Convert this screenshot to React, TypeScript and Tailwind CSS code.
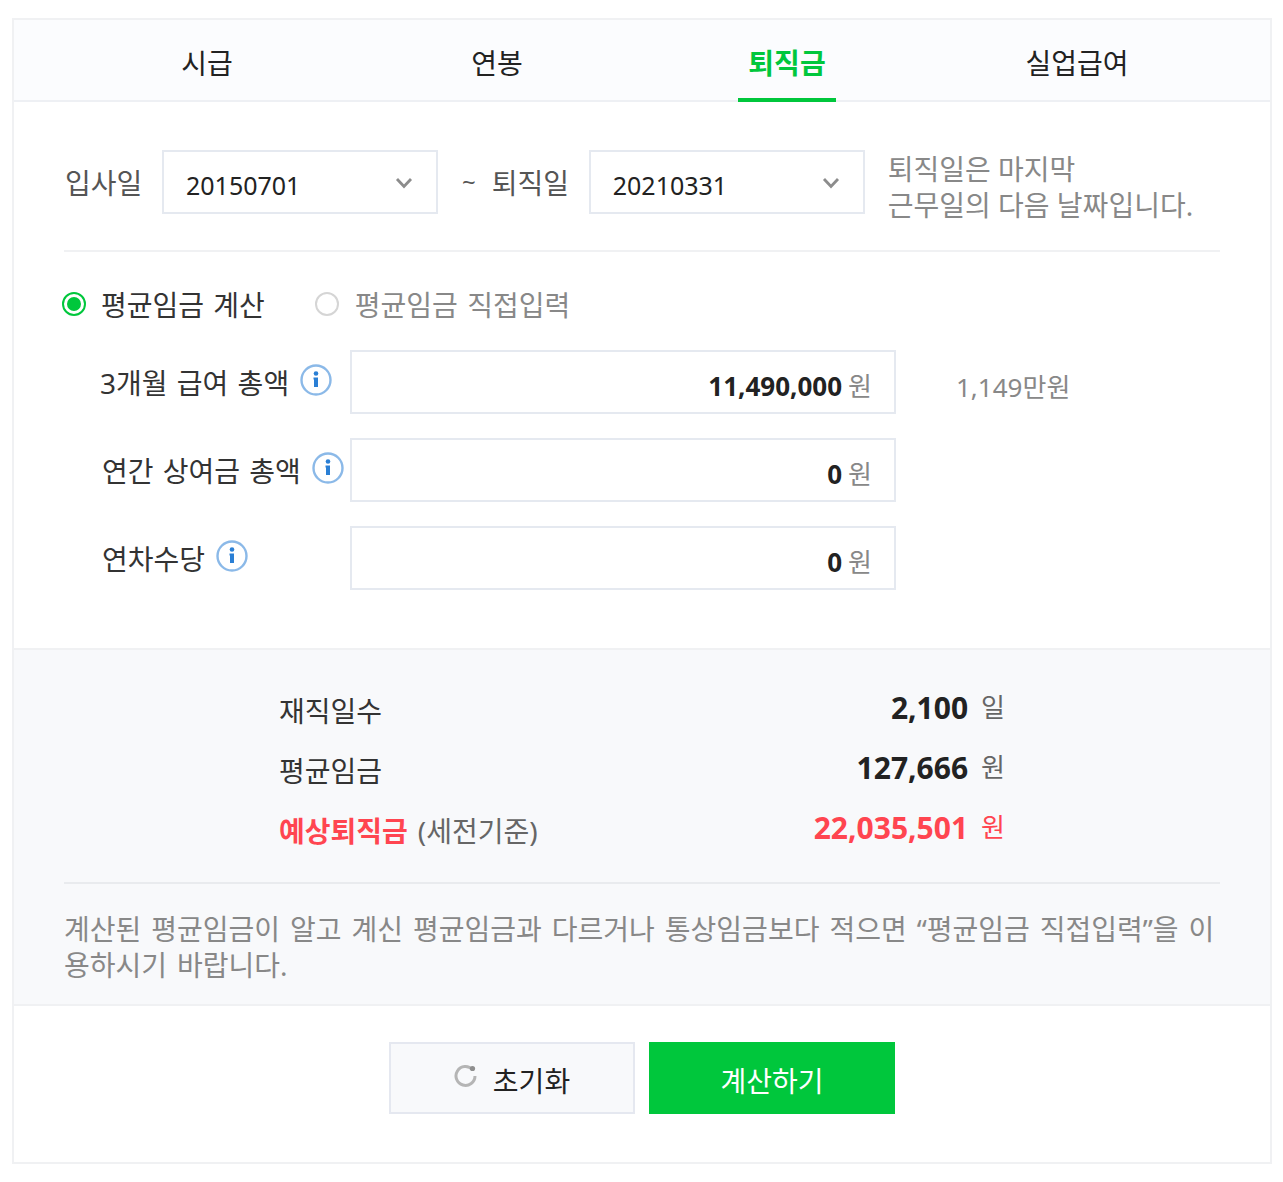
import React from 'react';

const FONT = "font-['Noto_Sans','Noto_Sans_CJK_KR',sans-serif]";

const tabs = ['시급', '연봉', '퇴직금', '실업급여'];

const InfoIcon = () => (
  <svg width="32" height="32" viewBox="0 0 32 32" className="shrink-0 -mt-1">
    <circle cx="16" cy="16" r="14.5" fill="#fff" stroke="#8bb9e8" strokeWidth="2.4" />
    <circle cx="16" cy="9.5" r="2.3" fill="#2a7fd5" />
    <path d="M13.5 13.5H18V23H14V15.5H13.5Z" fill="#2a7fd5" />
  </svg>
);

const Chevron = () => (
  <svg width="18" height="12" viewBox="0 0 18 12" className="shrink-0">
    <path d="M2 2l7 7.5L16 2" fill="none" stroke="#8c8c8c" strokeWidth="2.8" />
  </svg>
);

const DateSelect = ({ value }: { value: string }) => (
  <div className="w-[276px] h-16 border-2 border-[#e5e9f0] bg-white pl-[22px] pr-[23px] flex items-center justify-between">
    <span className="text-[25px] text-[#222] mt-2">{value}</span>
    <span className="mt-[2px]"><Chevron /></span>
  </div>
);

const MoneyRow = ({ label, value, indent, hint }: { label: string; value: string; indent: string; hint?: string }) => (
  <div className="flex items-center">
    <div className={`w-[286px] flex items-center gap-[11px] ${indent}`}>
      <span className="text-[28px] text-[#333] whitespace-nowrap [word-spacing:2px] mt-0.5">{label}</span>
      <InfoIcon />
    </div>
    <div className="w-[546px] h-16 border-2 border-[#e5e9f0] bg-white flex items-center justify-end pr-[22px] gap-1.5">
      <span className="text-[26px] font-bold text-[#222] mt-2">{value}</span>
      <span className="text-[26px] text-[#888] mt-2">원</span>
    </div>
    {hint && <span className="ml-[60px] mt-2.5 text-[26px] text-[#888]">{hint}</span>}
  </div>
);

const ResultRow = ({ label, sub, value, unit, red }: { label: string; sub?: string; value: string; unit: string; red?: boolean }) => (
  <div className="h-[60px] flex items-center justify-between">
    <div className={`text-[28px] mt-0.5 ${red ? 'text-[#ff4550] font-bold' : 'text-[#333]'}`}>
      {label}
      {sub && <span className="ml-2.5 font-normal text-[#666]">{sub}</span>}
    </div>
    <div className="flex items-center gap-[13px] -mt-1.5">
      <span className={`text-[30px] font-bold ${red ? 'text-[#ff4550]' : 'text-[#222]'}`}>{value}</span>
      <span className={`text-[26px] ${red ? 'text-[#ff4550]' : 'text-[#666]'}`}>{unit}</span>
    </div>
  </div>
);

export default function App() {
  return (
    <div className={`${FONT} bg-white w-[1283px] h-[1182px] pt-[18px] px-3`}>
      <div className="w-[1260px] h-[1146px] border-2 border-[#f0f1f3] bg-white flex flex-col">
        <div className="h-[82px] shrink-0 bg-[#fbfcfe] border-b-2 border-[#eef0f4] px-12 grid grid-cols-4">
          {tabs.map((tab, i) => (
            <div key={tab} className="flex justify-center">
              <div className={`h-[82px] px-2.5 flex items-center justify-center text-[28px] ${i === 2 ? 'pt-2 font-bold text-[#00c73c] border-b-4 border-[#00c73c]' : 'pt-1 text-[#222]'}`}>
                {tab}
              </div>
            </div>
          ))}
        </div>

        <div className="px-[50px] pt-12 h-[546px] shrink-0">
          <div className="flex items-center h-16">
            <span className="text-[28px] text-[#555] w-[98px] pl-px mt-0.5">입사일</span>
            <DateSelect value="20150701" />
            <span className="ml-6 text-[24px] text-[#555]">~</span>
            <span className="ml-4 w-[97px] text-[28px] text-[#555] mt-0.5">퇴직일</span>
            <DateSelect value="20210331" />
            <div className="ml-[23px] mt-2.5 text-[28px] leading-9 text-[#888] whitespace-nowrap">
              퇴직일은 마지막<br />근무일의 다음 날짜입니다.
            </div>
          </div>
          <div className="h-0.5 bg-[#f0f1f3] mt-9" />
          <div className="flex items-center mt-[34px] h-9">
            <span className="w-6 h-6 rounded-full border-2 border-[#00c73c] flex items-center justify-center -ml-0.5">
              <span className="w-3.5 h-3.5 rounded-full bg-[#00c73c]" />
            </span>
            <span className="ml-[15px] mt-0.5 text-[28px] text-[#333] [word-spacing:2px]">평균임금 계산</span>
            <span className="ml-[50px] w-6 h-6 rounded-full border-2 border-[#d5d5d5]" />
            <span className="ml-4 mt-0.5 text-[28px] text-[#888] [word-spacing:2px]">평균임금 직접입력</span>
          </div>
          <div className="flex flex-col gap-6 mt-[28px]">
            <MoneyRow label="3개월 급여 총액" value="11,490,000" indent="pl-9" hint="1,149만원" />
            <MoneyRow label="연간 상여금 총액" value="0" indent="pl-[38px]" />
            <MoneyRow label="연차수당" value="0" indent="pl-[38px]" />
          </div>
        </div>

        <div className="h-[358px] shrink-0 bg-[#f8f9fb] border-y-2 border-[#f0f1f3] px-[50px]">
          <div className="ml-[215px] w-[726px] pt-[30px] h-[232px]">
            <ResultRow label="재직일수" value="2,100" unit="일" />
            <ResultRow label="평균임금" value="127,666" unit="원" />
            <ResultRow label="예상퇴직금" sub="(세전기준)" value="22,035,501" unit="원" red />
          </div>
          <div className="h-0.5 bg-[#e9ebee]" />
          <p className="mt-[27px] text-[28px] leading-9 text-[#888] break-all [word-spacing:2.7px]">
            계산된 평균임금이 알고 계신 평균임금과 다르거나 통상임금보다 적으면 “평균임금 직접입력”을 이용하시기 바랍니다.
          </p>
        </div>

        <div className="flex justify-center gap-3.5 pt-9">
          <button className="w-[246px] h-[72px] border-2 border-[#e5e8f0] bg-[#f8f9fb] flex items-center justify-center gap-[15px] text-[28px] text-[#222]">
            <svg width="24" height="24" viewBox="0 0 24 24" className="shrink-0 -mt-1">
              <path d="M18.5 5.5A9.5 9.5 0 1 0 21 12" fill="none" stroke="#b5b5b5" strokeWidth="3" />
              <circle cx="18.5" cy="4.5" r="2.6" fill="#8f8f8f" />
            </svg>
            <span className="pt-1.5">초기화</span>
          </button>
          <button className="w-[246px] h-[72px] bg-[#00c73c] flex items-center justify-center text-[28px] text-white">
            <span className="pt-1.5">계산하기</span>
          </button>
        </div>
      </div>
    </div>
  );
}
